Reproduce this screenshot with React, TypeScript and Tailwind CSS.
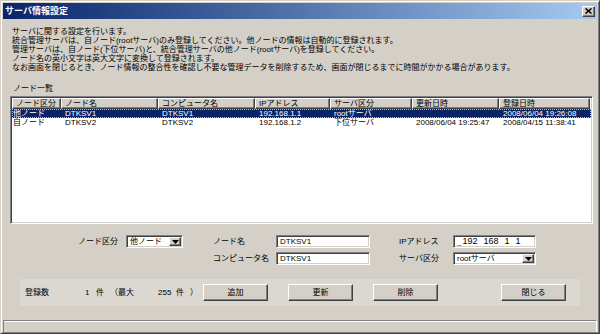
import React from 'react';

const font = "font-['Liberation_Sans','Noto_Sans_CJK_JP',sans-serif]";

// Win2000 style bevels
const raised =
  'bg-[#d4d0c8] border border-t-white border-l-white border-r-[#404040] border-b-[#404040] shadow-[inset_-1px_-1px_0_#808080]';
const sunken =
  'bg-white border border-t-[#808080] border-l-[#808080] border-r-white border-b-white shadow-[inset_1px_1px_0_#404040,inset_-1px_-1px_0_#d4d0c8]';

const columns = ['ノード区分', 'ノード名', 'コンピュータ名', 'IPアドレス', 'サーバ区分', '更新日時', '登録日時'];

const rows = [
  ['他ノード', 'DTKSV1', 'DTKSV1', '192.168.1.1', 'rootサーバ', '', '2008/06/04 19:26:08'],
  ['自ノード', 'DTKSV2', 'DTKSV2', '192.168.1.2', '下位サーバ', '2008/06/04 19:25:47', '2008/04/15 11:38:41'],
];

const colGrid = 'grid grid-cols-[49px_97px_97px_75px_82px_87px_91px]';

function DropButton() {
  return (
    <div className={`${raised} w-[12px] h-full flex items-center justify-center`}>
      <svg width="7" height="4" viewBox="0 0 7 4">
        <path d="M0 0h7L3.5 4z" fill="#000" />
      </svg>
    </div>
  );
}

function Select({ value, width }: { value: string; width: string }) {
  return (
    <div className={`${sunken} ${width} h-[13px] flex items-stretch p-[1px]`}>
      <span className="flex-1 pl-[2px] leading-[10px]">{value}</span>
      <DropButton />
    </div>
  );
}

function TextBox({ children, width }: { children: React.ReactNode; width: string }) {
  return (
    <div className={`${sunken} ${width} h-[13px] pl-[3px] leading-[11px] flex items-center`}>{children}</div>
  );
}

function Button({ label }: { label: string }) {
  return (
    <button className={`${raised} w-[65px] h-[17px] flex items-center justify-center text-black`}>{label}</button>
  );
}

export default function App() {
  return (
    <div
      className={`${font} w-[600px] h-[334px] flex flex-col bg-[#d4d0c8] text-[8px] leading-[9px] text-black border border-t-[#d4d0c8] border-l-[#d4d0c8] border-r-[#404040] border-b-[#404040] shadow-[inset_1px_1px_0_#fff,inset_-1px_-1px_0_#808080] p-[1px]`}
    >
      {/* Title bar */}
      <div className="h-[16px] mx-[1px] mt-[1px] flex items-center justify-between bg-gradient-to-r from-[#0a246a] to-[#a6caf0] pl-[2px] pr-[2px]">
        <span className="text-white font-bold text-[9px] leading-[10px]">サーバ情報設定</span>
        <div className={`${raised} w-[13px] h-[11px] flex items-center justify-center`}>
          <svg width="7" height="6" viewBox="0 0 7 6">
            <path d="M0.5 0.5l6 5M6.5 0.5l-6 5" stroke="#000" strokeWidth="1.6" />
          </svg>
        </div>
      </div>

      {/* Description */}
      <div className="ml-[10px] mt-[8px]">
        <p>サーバに関する設定を行います。</p>
        <p>統合管理サーバは、自ノード(rootサーバ)のみ登録してください。他ノードの情報は自動的に登録されます。</p>
        <p>管理サーバは、自ノード(下位サーバ)と、統合管理サーバの他ノード(rootサーバ)を登録してください。</p>
        <p>ノード名の英小文字は英大文字に変換して登録されます。</p>
        <p>なお画面を閉じるとき、ノード情報の整合性を確認し不要な管理データを削除するため、画面が閉じるまでに時間がかかる場合があります。</p>
      </div>

      <p className="ml-[11px] mt-[12px]">ノード一覧</p>

      {/* Node list */}
      <div className={`${sunken} ml-[8px] mt-[3px] w-[583px] h-[128px] p-[1px] overflow-hidden`}>
        <div className={colGrid}>
          {columns.map((c) => (
            <div key={c} className={`${raised} h-[11px] pl-[3px] leading-[9px] truncate`}>
              {c}
            </div>
          ))}
        </div>
        {rows.map((r, i) => (
          <div
            key={i}
            className={`${colGrid} h-[9px] leading-[9px] ${i === 0 ? 'bg-[#0a246a] text-white outline outline-1 outline-dotted outline-[#c0c0c0] -outline-offset-1' : ''}`}
          >
            {r.map((cell, j) => (
              <span key={j} className={`${j === 0 ? 'pl-[1px]' : 'pl-[4px]'} whitespace-nowrap overflow-hidden`}>
                {cell}
              </span>
            ))}
          </div>
        ))}
      </div>

      {/* Edit form */}
      <div className="flex mt-[11px]">
        <div className="ml-[76px] flex items-start gap-[8px]">
          <span className="leading-[13px]">ノード区分</span>
          <Select value="他ノード" width="w-[57px]" />
        </div>
        <div className="ml-[30px] grid grid-cols-[63px_94px] gap-y-[4px] items-center">
          <span>ノード名</span>
          <TextBox width="w-[94px]">DTKSV1</TextBox>
          <span>コンピュータ名</span>
          <TextBox width="w-[94px]">DTKSV1</TextBox>
        </div>
        <div className="ml-[29px] grid grid-cols-[54px_83px] gap-y-[4px] items-center">
          <span>IPアドレス</span>
          <TextBox width="w-[83px]">
            <span className="text-[#404040] mr-[1px]">_</span>
            <span className="flex gap-[6px] text-[9px]">
              <span>192</span>
              <span>168</span>
              <span>1</span>
              <span>1</span>
            </span>
          </TextBox>
          <span>サーバ区分</span>
          <Select value="rootサーバ" width="w-[83px]" />
        </div>
      </div>

      {/* Count + actions */}
      <div className="ml-[18px] mt-[14px] w-[560px] h-[27px] bg-[#dbd8d1] flex items-center pl-[5px]">
        <span className="w-[60px]">登録数</span>
        <span className="w-[11px]">1</span>
        <span className="w-[14px]">件</span>
        <span className="w-[48px]">（最大</span>
        <span className="w-[18px]">255</span>
        <span className="w-[14px]">件</span>
        <span className="w-[13px]">）</span>
        <div className="flex gap-[20px]">
          <Button label="追加" />
          <Button label="更新" />
          <Button label="削除" />
        </div>
        <div className="ml-[63px]">
          <Button label="閉じる" />
        </div>
      </div>

      {/* Status bar */}
      <div className="mt-auto mx-[1px] h-[12px] border-t border-t-[#808080] border-l border-l-[#808080] border-r border-r-white shadow-[inset_0_1px_0_#fff]" />
    </div>
  );
}
